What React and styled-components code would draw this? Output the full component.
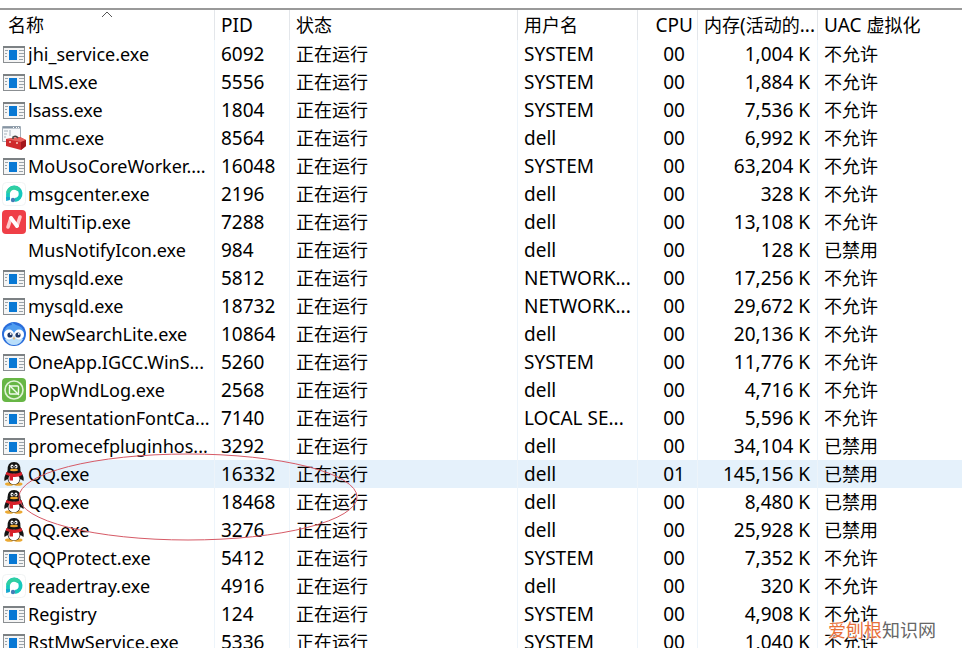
import React from 'react';
import styled, { createGlobalStyle } from 'styled-components';

const GlobalStyle = createGlobalStyle`
  html, body {
    margin: 0;
    background: #fff;
    overflow: hidden;
  }
`

const Window = styled.main`
  position: relative;
  height: 100vh;
  overflow: hidden;
  box-sizing: border-box;
  padding-top: 8px;
  color: #000;
  font-family: 'Noto Sans', 'Noto Sans CJK SC', sans-serif;
  font-size: 19px;
`

const ProcessTable = styled.table`
  width: 100%;
  table-layout: fixed;
  border-collapse: separate;
  border-spacing: 0;
  border-top: 2px solid #999;
`

const Column = styled.col`
  width: ${ props => props.$width || 'auto' };
`

const HeadCell = styled.th`
  position: relative;
  height: 30px;
  box-sizing: border-box;
  padding: 0 4px 0 ${ props => props.$first ? '8px' : '6px' };
  border-right: 1px solid #e3e6ea;
  font-weight: 400;
  line-height: 28px;
  text-align: ${ props => props.$align || 'left' };
  white-space: nowrap;

  &:last-child {
    border-right: 0;
  }
`

const SortButton = styled.button`
  display: block;
  width: 100%;
  padding: 0;
  border: 0;
  background: none;
  color: inherit;
  font: inherit;
  line-height: 28px;
  text-align: left;
`

const SortArrow = styled.svg`
  position: absolute;
  top: 1px;
  left: 50%;
  margin-left: -6px;
`

const Row = styled.tr`
  background: ${ props => props.$selected ? '#e5f1fb' : 'transparent' };
`

const Cell = styled.td`
  height: 28px;
  box-sizing: border-box;
  padding: 0 ${ props => props.$right || '4px' } 0 6px;
  border-right: 1px solid #edf4fa;
  line-height: 28px;
  text-align: ${ props => props.$align || 'left' };
  white-space: nowrap;

  &:last-child {
    border-right: 0;
  }
`

const NameCell = styled(Cell)`
  padding: 0 0 0 2px;
  font-size: 18px;
`

const ProcessName = styled.div`
  display: flex;
  align-items: center;
  gap: 2px;
  height: 28px;
`

const IconBox = styled.span`
  display: flex;
  flex: none;
  width: 24px;
  height: 24px;
`

const Han = styled.span`
  font-family: 'Noto Sans CJK SC', sans-serif;
  font-size: 18px;
  line-height: 1;
`

const Mark = styled.svg`
  position: absolute;
  top: 453px;
  left: 17px;
  pointer-events: none;
`

const Watermark = styled.div`
  position: absolute;
  right: 26px;
  bottom: 6px;
  color: #666;
  font-family: 'Noto Sans CJK SC', sans-serif;
  font-size: 18px;
  line-height: 26px;
  text-shadow: 0 0 1px #fff, 0 0 2px #fff, 0 0 2px #fff;

  > span {
    color: #e8703a;
  }
`

const AppIcon = () => (
  <svg width="24" height="24" viewBox="0 0 24 24">
    <rect x="1.5" y="4.5" width="21" height="16" fill="#f5f5f5" stroke="#8b8f92" />
    <path d="M1 5h22" stroke="#7c8184" strokeWidth="2" />
    <rect x="7" y="8" width="8" height="10" fill="#0878d4" />
    <path d="M3 8.5h3M3 11.5h2M3 14.5h2M17 8.5h5M17 11.5h5M17 14.5h5M17 17.5h4" stroke="#9aa3aa" />
  </svg>
)

const ToolboxIcon = () => (
  <svg width="24" height="24" viewBox="0 0 24 24">
    <path d="M.5.5h18v15H.5z" fill="#f7f9fb" stroke="#a3afb9" />
    <path d="M1 1.5h17" stroke="#8795a3" strokeWidth="2" />
    <path d="M11 1.5h1M14 1.5h1M16 1.5h1" stroke="#fff" />
    <path d="M2 5h4M2 8h3M2 11h2M8 4v6" stroke="#a5b1bb" />
    <path d="M4 13l14-2 6 3v6l-5 4-15-4z" fill="#cf2a2c" />
    <path d="M4 13l14-2 6 3-5 2z" fill="#e8615c" />
    <path d="M19 16l5-2v6l-5 4z" fill="#a3171b" />
    <path d="M11 13v-2q3-2 5 1" fill="none" stroke="#444" strokeWidth="1.5" />
    <path d="M8 15v2M15 16v2" stroke="#f5cbc0" strokeWidth="1.5" />
  </svg>
)

const ReaderIcon = () => (
  <svg width="24" height="24" viewBox="0 0 24 24">
    <rect x=".5" y=".5" width="23" height="23" rx="4" fill="#fff" stroke="#f1f3f4" />
    <path d="M6 17v-5a6.3 6.3 0 1 1 7 6" fill="none" stroke="#16c8bd" strokeWidth="3.8" />
    <path d="M6 11a6.3 6.3 0 0 1 11-3" fill="none" stroke="#30cfa2" strokeWidth="3.8" />
    <circle cx="11" cy="18" r="2.2" fill="#437eb7" />
    <path d="M4.1 15h3.8v3l-3.8 1z" fill="#15a8cf" />
  </svg>
)

const TipIcon = () => (
  <svg width="24" height="24" viewBox="0 0 24 24">
    <rect width="24" height="24" rx="4" fill="#ef3f47" />
    <path d="M6 17l3-9M15 16l3-9" stroke="#ffc9c8" strokeWidth="3.6" strokeLinecap="round" />
    <path d="M9 8l6 8" stroke="#fff" strokeWidth="3.8" strokeLinecap="round" />
  </svg>
)

const BirdIcon = () => (
  <svg width="24" height="24" viewBox="0 0 24 24">
    <circle cx="12" cy="12" r="12" fill="#2a6ddb" />
    <path d="M2 10Q4 3 10 3L9 0l5 3q7 1 8 8v4q-4 7-10 7T2 15z" fill="#4f9df0" />
    <path d="M3 17q9-5 18 0-3 6-9 6t-9-6" fill="#b9defa" />
    <circle cx="7" cy="12.5" r="5" fill="#fff" />
    <circle cx="17" cy="12.5" r="5" fill="#fff" />
    <circle cx="8" cy="13" r="2.6" fill="#1d3767" />
    <circle cx="16" cy="13" r="2.6" fill="#1d3767" />
    <circle cx="8.8" cy="12" r=".9" fill="#fff" />
    <circle cx="16.8" cy="12" r=".9" fill="#fff" />
    <path d="M10.5 15.5h3L12 18z" fill="#e9b36a" />
  </svg>
)

const PopIcon = () => (
  <svg width="24" height="24" viewBox="0 0 24 24">
    <rect width="24" height="24" rx="4" fill="#67b645" />
    <circle cx="12" cy="12" r="9" fill="none" stroke="#e0f3d6" strokeWidth="1.6" />
    <rect x="7.5" y="8" width="9" height="8" rx="1" fill="none" stroke="#f0faeb" strokeWidth="1.4" />
    <path d="M7 7l10 10" stroke="#f0faeb" strokeWidth="1.4" />
  </svg>
)

const PenguinIcon = () => (
  <svg width="24" height="24" viewBox="0 0 24 24">
    <ellipse cx="7.5" cy="22" rx="4.5" ry="1.8" fill="#eba933" />
    <ellipse cx="16" cy="22" rx="4.5" ry="1.8" fill="#eba933" />
    <path d="M5.5 9Q5 0 12 0t6.500 9q4 6 3 10l-3-2q-1 5.500-6.500 5.500T5.500 17l-3 2q-1-4 3-10z" fill="#151515" />
    <ellipse cx="12" cy="17" rx="5.6" ry="5.2" fill="#fff" />
    <ellipse cx="10" cy="4.600" rx="1.500" ry="2" fill="#fff" />
    <ellipse cx="14" cy="4.600" rx="1.500" ry="2" fill="#fff" />
    <circle cx="10.300" cy="4.800" r=".7" />
    <circle cx="13.700" cy="4.800" r=".7" />
    <ellipse cx="12" cy="8" rx="4" ry="1.200" fill="#e9a52a" />
    <path d="M4.500 10q7.500 3.500 15 0l.8 3q-4 2.500-9.300 2v3.500H7.500V14l-3.800-1.500z" fill="#d8202a" />
  </svg>
)

const icons = {
  app: AppIcon,
  toolbox: ToolboxIcon,
  reader: ReaderIcon,
  tip: TipIcon,
  bird: BirdIcon,
  pop: PopIcon,
  penguin: PenguinIcon
}

const DENIED = '不允许'
const DISABLED = '已禁用'

const processes = [
  { icon: 'app', name: 'jhi_service.exe', pid: 6092, user: 'SYSTEM', memory: '1,004', uac: DENIED },
  { icon: 'app', name: 'LMS.exe', pid: 5556, user: 'SYSTEM', memory: '1,884', uac: DENIED },
  { icon: 'app', name: 'lsass.exe', pid: 1804, user: 'SYSTEM', memory: '7,536', uac: DENIED },
  { icon: 'toolbox', name: 'mmc.exe', pid: 8564, user: 'dell', memory: '6,992', uac: DENIED },
  { icon: 'app', name: 'MoUsoCoreWorker....', pid: 16048, user: 'SYSTEM', memory: '63,204', uac: DENIED },
  { icon: 'reader', name: 'msgcenter.exe', pid: 2196, user: 'dell', memory: '328', uac: DENIED },
  { icon: 'tip', name: 'MultiTip.exe', pid: 7288, user: 'dell', memory: '13,108', uac: DENIED },
  { icon: null, name: 'MusNotifyIcon.exe', pid: 984, user: 'dell', memory: '128', uac: DISABLED },
  { icon: 'app', name: 'mysqld.exe', pid: 5812, user: 'NETWORK...', memory: '17,256', uac: DENIED },
  { icon: 'app', name: 'mysqld.exe', pid: 18732, user: 'NETWORK...', memory: '29,672', uac: DENIED },
  { icon: 'bird', name: 'NewSearchLite.exe', pid: 10864, user: 'dell', memory: '20,136', uac: DENIED },
  { icon: 'app', name: 'OneApp.IGCC.WinS...', pid: 5260, user: 'SYSTEM', memory: '11,776', uac: DENIED },
  { icon: 'pop', name: 'PopWndLog.exe', pid: 2568, user: 'dell', memory: '4,716', uac: DENIED },
  { icon: 'app', name: 'PresentationFontCa...', pid: 7140, user: 'LOCAL SE...', memory: '5,596', uac: DENIED },
  { icon: 'app', name: 'promecefpluginhos...', pid: 3292, user: 'dell', memory: '34,104', uac: DISABLED },
  { icon: 'penguin', name: 'QQ.exe', pid: 16332, user: 'dell', cpu: '01', memory: '145,156', uac: DISABLED, selected: true },
  { icon: 'penguin', name: 'QQ.exe', pid: 18468, user: 'dell', memory: '8,480', uac: DISABLED },
  { icon: 'penguin', name: 'QQ.exe', pid: 3276, user: 'dell', memory: '25,928', uac: DISABLED },
  { icon: 'app', name: 'QQProtect.exe', pid: 5412, user: 'SYSTEM', memory: '7,352', uac: DENIED },
  { icon: 'reader', name: 'readertray.exe', pid: 4916, user: 'dell', memory: '320', uac: DENIED },
  { icon: 'app', name: 'Registry', pid: 124, user: 'SYSTEM', memory: '4,908', uac: DENIED },
  { icon: 'app', name: 'RstMwService.exe', pid: 5336, user: 'SYSTEM', memory: '1,040', uac: DENIED }
]

const ProcessRow = ({ process }) => {
  const Icon = icons[process.icon]

  return(
    <Row $selected={ process.selected }>
      <NameCell>
        <ProcessName>
          <IconBox>{ Icon && <Icon /> }</IconBox>
          <span>{ process.name }</span>
        </ProcessName>
      </NameCell>
      <Cell>{ process.pid }</Cell>
      <Cell><Han>正在运行</Han></Cell>
      <Cell>{ process.user }</Cell>
      <Cell $align="right" $right="12px">{ process.cpu || '00' }</Cell>
      <Cell $align="right" $right="7px">{ process.memory } K</Cell>
      <Cell><Han>{ process.uac }</Han></Cell>
    </Row>
  )
}

const App = () => (
  <Window>
    <GlobalStyle />
    <ProcessTable>
      <colgroup>
        <Column $width="215px" />
        <Column $width="75px" />
        <Column $width="228px" />
        <Column $width="120px" />
        <Column $width="60px" />
        <Column $width="120px" />
        <Column />
      </colgroup>
      <thead>
        <tr>
          <HeadCell $first aria-sort="ascending">
            <SortButton type="button">
              <Han>名称</Han>
            </SortButton>
            <SortArrow width="12" height="7" viewBox="0 0 12 7">
              <path d="M1 6l5-5 5 5" fill="none" stroke="#555" />
            </SortArrow>
          </HeadCell>
          <HeadCell>PID</HeadCell>
          <HeadCell><Han>状态</Han></HeadCell>
          <HeadCell><Han>用户名</Han></HeadCell>
          <HeadCell $align="right">CPU</HeadCell>
          <HeadCell><Han>内存</Han>(<Han>活动的</Han>...</HeadCell>
          <HeadCell>UAC <Han>虚拟化</Han></HeadCell>
        </tr>
      </thead>
      <tbody>
        { processes.map(process => <ProcessRow key={ process.pid } process={ process } />) }
      </tbody>
    </ProcessTable>
    <Mark width="342" height="88" viewBox="0 0 342 88">
      <ellipse cx="171" cy="44" rx="169" ry="43" fill="none" stroke="#d65a66" />
    </Mark>
    <Watermark><span>爱刨根</span>知识网</Watermark>
  </Window>
)

export default App
